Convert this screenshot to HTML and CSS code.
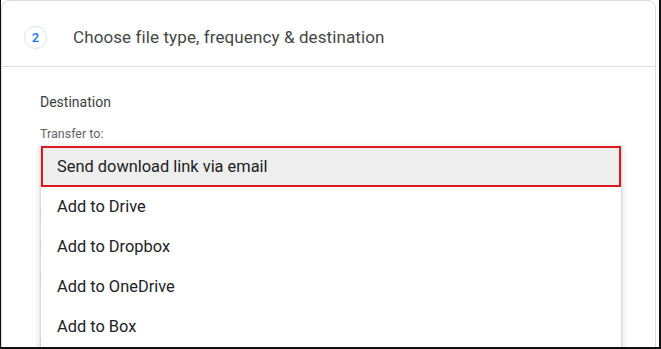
FILE: index.html
```html
<!DOCTYPE html>
<html lang="en">
<head>
    <meta charset="UTF-8">
    <meta name="viewport" content="width=device-width, initial-scale=1.0">
    <title>Choose file type</title>
    <link rel="stylesheet" href="styles.css">
</head>
<body>
    <div class="frame">
        <section class="card">
            <header class="step-head">
                <span class="step-num">2</span>
                <h2 class="step-title">Choose file type, frequency &amp; destination</h2>
            </header>
            <div class="step-body">
                <h3 class="section-title">Destination</h3>
                <div class="field-label">Transfer to:</div>
                <div class="select-wrap">
                    <div class="select">Send download link via email</div>
                    <div class="under">
                        <div class="under-row">Frequency</div>
                        <div class="under-row">Export once</div>
                        <div class="under-row">File type &amp; size</div>
                        <div class="under-row">.zip</div>
                        <div class="under-row">2 GB</div>
                    </div>
                    <ul class="menu">
                        <li class="menu-item selected">Send download link via email</li>
                        <li class="menu-item">Add to Drive</li>
                        <li class="menu-item">Add to Dropbox</li>
                        <li class="menu-item">Add to OneDrive</li>
                        <li class="menu-item">Add to Box</li>
                    </ul>
                </div>
            </div>
        </section>
    </div>
</body>
</html>
```

FILE: styles.css
```css
html, body {
    margin: 0;
    padding: 0;
    background: #fff;
}
body {
    font-family: Roboto, "Noto Sans", sans-serif;
    color: #3c4043;
    width: 661px;
    height: 349px;
    overflow: hidden;
}
.frame {
    box-sizing: border-box;
    width: 661px;
    height: 349px;
    border-left: 1px solid #111;
    border-right: 2px solid #111;
    border-bottom: 2px solid #111;
    overflow: hidden;
    padding-right: 3px;
}
.card {
    border: 1px solid #dadce0;
    border-radius: 8px 8px 0 0;
    height: 400px;
}
.step-head {
    box-sizing: border-box;
    display: flex;
    align-items: center;
    height: 66px;
    padding: 7px 0 0 22px;
    border-bottom: 1px solid #dadce0;
}
.step-num {
    box-sizing: border-box;
    width: 23px;
    height: 23px;
    border: 1px solid #d2e3fc;
    border-radius: 50%;
    display: flex;
    align-items: center;
    justify-content: center;
    color: #1a73e8;
    font-size: 13px;
    font-weight: 500;
}
.step-title {
    margin: 0 0 0 26px;
    font-size: 17px;
    font-weight: 400;
    color: #444746;
    letter-spacing: 0.1px;
}
.step-body {
    padding: 27px 0 0 38px;
}
.section-title {
    margin: 0;
    font-size: 14px;
    font-weight: 400;
    color: #3c4043;
    line-height: 16px;
}
.field-label {
    margin-top: 17px;
    font-size: 12.5px;
    color: #5f6368;
    line-height: 14px;
}
.select-wrap {
    position: relative;
    margin-top: 5px;
}
.select {
    height: 40px;
    line-height: 40px;
    padding-left: 16px;
    font-size: 16px;
    color: #202124;
}
.under {
    padding-top: 12px;
    font-size: 13px;
    color: #9aa0a6;
}
.under-row {
    height: 32px;
    line-height: 32px;
}
.menu {
    position: absolute;
    top: 0;
    left: 1px;
    width: 580px;
    height: 260px;
    margin: 0;
    padding: 0;
    list-style: none;
    background: #fff;
    box-shadow: 0 2px 6px 2px rgba(60, 64, 67, 0.15), 0 1px 2px rgba(60, 64, 67, 0.3);
}
.menu-item {
    box-sizing: border-box;
    height: 40px;
    line-height: 40px;
    padding-left: 16px;
    font-size: 16.4px;
    color: #202124;
}
.menu-item.selected {
    height: 41px;
    line-height: 37px;
    padding-left: 14px;
    background: #eeeeee;
    border: 2px solid #dc1a1f;
}
```
